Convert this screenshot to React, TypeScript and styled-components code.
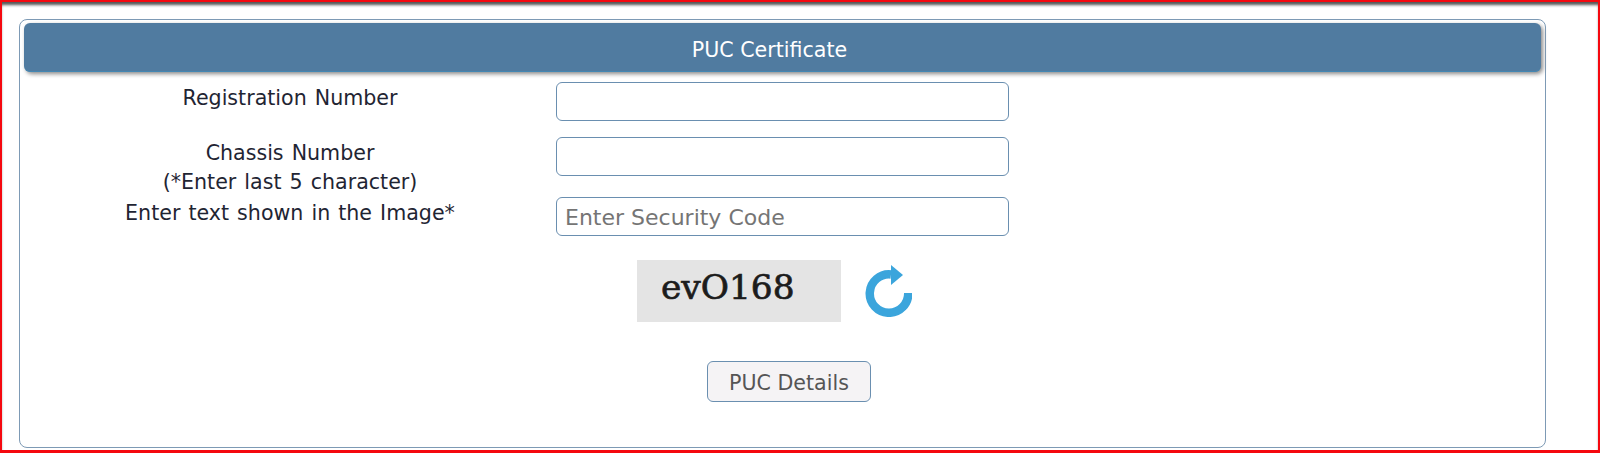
import React from 'react';
import styled, { createGlobalStyle } from 'styled-components';

const GlobalStyle = createGlobalStyle`
  html, body {
    margin: 0;
    padding: 0;
    background: #fff;
    font-family: "DejaVu Sans", Verdana, sans-serif;
  }
`;

const Frame = styled.div`
  box-sizing: border-box;
  height: 453px;
  border: 2px solid #f5080f;
  border-bottom-width: 3px;
  padding: 17px 52px 2px 17px;
  box-shadow: inset 0 4px 3px -1px #555;
`;

const Panel = styled.div`
  box-sizing: border-box;
  height: 429px;
  border: 1px solid #7d9ab5;
  border-radius: 8px;
  padding: 3px 4px 0 4px;
`;

const Header = styled.div`
  box-sizing: border-box;
  height: 49px;
  display: flex;
  align-items: center;
  justify-content: center;
  padding: 5px 26px 0 0;
  background: #507ba0;
  border-bottom: 1px solid #4487b3;
  border-radius: 6px;
  box-shadow: 2px 2px 4px #8a8a8a;
  color: #fff;
  font-size: 20.6px;
`;

const Form = styled.div`
  display: grid;
  grid-template-columns: 532px 453px;
  padding-top: 10px;
`;

const Label = styled.div`
  padding-top: 2px;
  font-size: 20.6px;
  line-height: 29px;
  word-spacing: 1.5px;
  color: #1f2533;
  text-align: center;
`;

const Field = styled.div<{ $bottom: number }>`
  padding-bottom: ${(p) => p.$bottom}px;
`;

const TextInput = styled.input`
  display: block;
  box-sizing: border-box;
  width: 100%;
  height: 39px;
  padding: 2px 8px 0;
  border: 1px solid #6a8fb0;
  border-radius: 6px;
  background: #fff;
  font-family: inherit;
  font-size: 22px;
  color: #333;

  &::placeholder {
    color: #757575;
    opacity: 1;
  }
`;

const CaptchaRow = styled.div`
  grid-column: 2;
  display: flex;
  align-items: flex-start;
  gap: 24px;
  padding: 24px 0 0 81px;
`;

const CaptchaImage = styled.div`
  box-sizing: border-box;
  width: 204px;
  height: 62px;
  padding: 9px 0 0 24px;
  background: #e4e4e4;
  font-family: "DejaVu Serif", "Liberation Serif", serif;
  font-size: 34.4px;
  line-height: 36px;
  color: #1c1c1c;
  -webkit-text-stroke: 0.7px #1c1c1c;
`;

const RefreshIcon = styled.svg`
  display: block;
  width: 47px;
  height: 52px;
  margin-top: 5px;
`;

const ButtonRow = styled.div`
  grid-column: 2;
  padding: 39px 0 0 151px;
`;

const DetailsButton = styled.button`
  box-sizing: border-box;
  width: 164px;
  height: 41px;
  padding: 2px 0 0;
  border: 1px solid #6a8fb0;
  border-radius: 6px;
  background: #f5f3f5;
  font-family: inherit;
  font-size: 20.6px;
  color: #555;
`;

const App: React.FC = () => {
  return (
    <Frame>
      <GlobalStyle />
      <Panel>
        <Header>PUC Certificate</Header>
        <Form>
          <Label>Registration Number</Label>
          <Field $bottom={16}>
            <TextInput type='text' />
          </Field>
          <Label>
            Chassis Number
            <br />
            (*Enter last 5 character)
          </Label>
          <Field $bottom={20}>
            <TextInput type='text' />
          </Field>
          <Label>Enter text shown in the Image*</Label>
          <Field $bottom={0}>
            <TextInput type='text' placeholder='Enter Security Code' />
          </Field>
          <CaptchaRow>
            <CaptchaImage>evO168</CaptchaImage>
            <RefreshIcon viewBox='0 0 47 52' aria-label='refresh'>
              <path
                d='M43.25 28 A19.25 19.25 0 1 1 26 9.4'
                fill='none'
                stroke='#3ba5dc'
                strokeWidth='8.5'
              />
              <path d='M26 0 L38 10 L26 20 Z' fill='#3ba5dc' />
            </RefreshIcon>
          </CaptchaRow>
          <ButtonRow>
            <DetailsButton type='button'>PUC Details</DetailsButton>
          </ButtonRow>
        </Form>
      </Panel>
    </Frame>
  );
};

export default App;
